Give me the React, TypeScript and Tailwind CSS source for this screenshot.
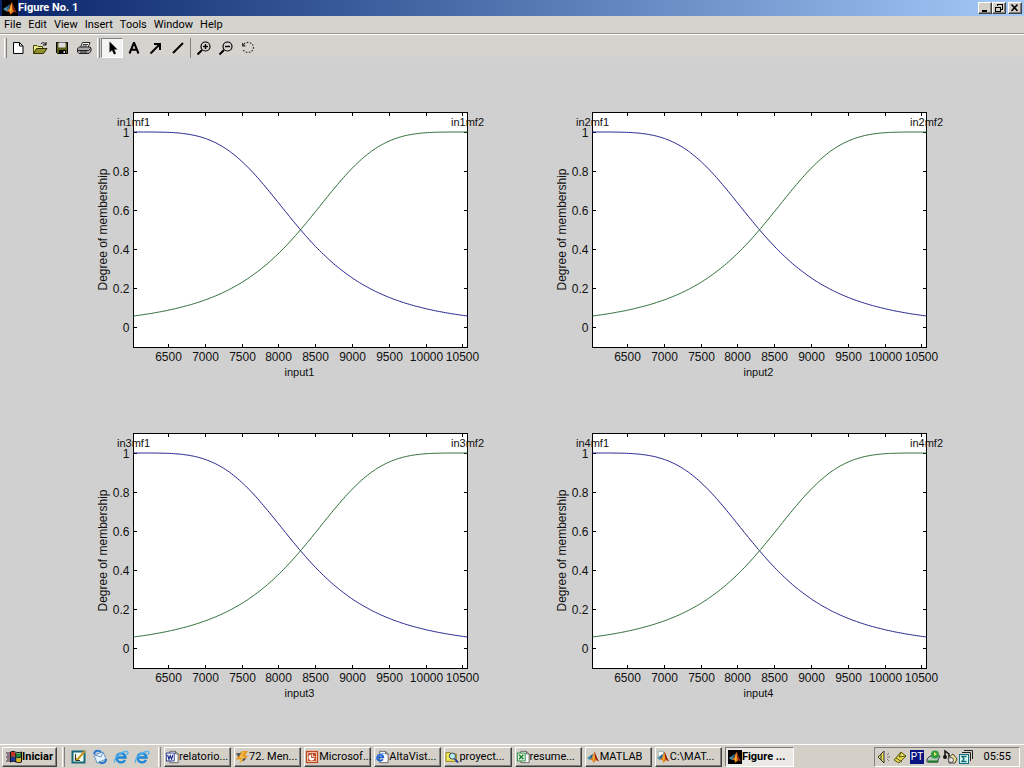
import React from 'react';

const raised = 'border border-t-white border-l-white border-r-[#404040] border-b-[#404040] shadow-[inset_-1px_-1px_0_#808080]';
const sunken = 'border border-t-[#808080] border-l-[#808080] border-r-white border-b-white';

const Icon: React.FC<{ children: React.ReactNode }> = ({ children }) => (
  <svg viewBox="0 0 16 16" className="w-4 h-4 shrink-0" fill="none" aria-hidden="true">
    {children}
  </svg>
);

const MatlabMark: React.FC<{ dark?: boolean; page?: boolean }> = ({ dark, page }) => (
  <Icon>
    {dark && <rect width="16" height="16" fill="#000" />}
    {page && <path d="M2.500 1.500 H8.500 V8 H2.500Z" fill="#fff" stroke="#8aa" />}
    <path d="M1 9 L5 6.500 L8 4.500 L6.500 10 L4.500 11.500Z" fill="#4a8fa8" />
    <path d="M5 6.500 L8 4.500 L6.500 9 L5 10Z" fill="#245e88" />
    <path d="M4.500 11.500 L7 9 L9.500 2 C11 4 12.500 10 15 13 L12 11.500 L8.500 14.500 L7 11.500Z" fill="#e07818" />
    <path d="M9.500 2 C11 4 12.500 10 15 13 L12 11.500 L10.500 9Z" fill="#8c1c10" />
    <path d="M9.400 3 L10 9 L8.500 13 L8 10Z" fill="#f8b838" />
  </Icon>
);

const ExplorerIcon: React.FC = () => (
  <Icon>
    <path d="M12 11 A4.500 4.500 0 1 1 12.500 8.500 H4.500" stroke="#1c86d8" strokeWidth="2.400" />
    <path d="M2 13.500 C-1 12 7 2 14 2.500 C15.500 3 15 4.500 14 6" stroke="#58b4ee" strokeWidth="1.400" />
  </Icon>
);

const Magnifier: React.FC<{ plus?: boolean }> = ({ plus }) => (
  <Icon>
    <circle cx="9.500" cy="6.500" r="4.500" stroke="#000" strokeWidth="1.200" />
    <path d="M6 10 L1.500 14.500" stroke="#000" strokeWidth="2" />
    <path d="M7 6.500 H12" stroke="#000" strokeWidth="1.400" />
    {plus && <path d="M9.500 4 V9" stroke="#000" strokeWidth="1.400" />}
  </Icon>
);

const fileTools = [
  { label: 'New', icon: <Icon><path d="M3.500 2.500 H9.500 L13 6 V13.500 H3.500Z" fill="#fff" stroke="#000" /><path d="M9.500 2.500 V6 H13" stroke="#000" /></Icon> },
  { label: 'Open', icon: <Icon><path d="M1.500 13.500 V5.500 H5 L6 6.500 H10.500 V8.500" fill="#f0ec90" stroke="#4a4a00" /><path d="M1.500 13.500 L4.500 8.500 H15 L11.500 13.500Z" fill="#90902c" stroke="#303000" /><path d="M9 4 C10.500 2 12.500 2.500 13.500 4.500 M14 2 V5 H11" stroke="#000" /></Icon> },
  { label: 'Save', icon: <Icon><path d="M2.500 2.500 H13.500 V13.500 H3.500 L2.500 12.500Z" fill="#5d5d14" stroke="#000" /><path d="M4.500 2.500 H11.500 V7.500 H4.500Z" fill="#dedede" /><path d="M5 10 H12 V13 H5Z" fill="#000" /><path d="M9.500 11 H11 V13 H9.500Z" fill="#ddd" /></Icon> },
  { label: 'Print', icon: <Icon><path d="M4.500 7.500 L6.500 2.500 H14 L12 7.500Z" fill="#fff" stroke="#222" /><path d="M7 4.500 H12 M6.500 6 H11" stroke="#333" /><path d="M1.500 8.500 L3.500 7 H14 L15 8 V11 L13 13.500 H3 L1.500 12Z" fill="#aaa" stroke="#222" /><path d="M2 10.500 H12.500 L14.500 8.500 M4 12 H11" stroke="#222" /></Icon> },
];

const editTools = [
  { label: 'Select', active: true, icon: <Icon><path d="M5.500 1.500 V12.500 L8 10.300 L10 14.500 L12 13.500 L10.200 9.500 H13.500Z" fill="#000" /></Icon> },
  { label: 'Text', icon: <Icon><path d="M3.500 13.500 L7.800 3 H8.200 L12.500 13.500 M5 9.800 H11" stroke="#000" strokeWidth="2" /></Icon> },
  { label: 'Arrow', icon: <Icon><path d="M2.500 13.500 L12 4" stroke="#000" strokeWidth="2" /><path d="M6 3 H13 V10 H11 V5 H6Z" fill="#000" /><path d="M9 4 L12 7 L12 4Z" fill="#000" /></Icon> },
  { label: 'Line', icon: <Icon><path d="M3 13 L13 3" stroke="#000" strokeWidth="2" /></Icon> },
];

const viewTools = [
  { label: 'Zoom in', icon: <Magnifier plus /> },
  { label: 'Zoom out', icon: <Magnifier /> },
  { label: 'Rotate', icon: <Icon><path d="M4 4 A5.500 5 0 1 1 3 9.500" stroke="#333" strokeWidth="1.200" strokeDasharray="1.600 1.400" /><path d="M2 2.500 V6.500 H6Z" fill="#333" /></Icon> },
];

const ToolGroup: React.FC<{ tools: { label: string; icon: React.ReactNode; active?: boolean }[] }> = ({ tools }) => (
  <div className="flex">
    {tools.map((tool) => (
      <button
        key={tool.label}
        aria-label={tool.label}
        className={`w-[22px] h-5 flex items-center justify-center ${tool.active ? `bg-[#f4f4f2] ${sunken}` : ''}`}
      >
        {tool.icon}
      </button>
    ))}
  </div>
);

const Grip: React.FC = () => <div className="w-[3px] h-5 border-l border-l-white border-r border-r-[#808080]"></div>;

// Axes are 334 x 235. Each curve is a bell centred on one edge and crossing 0.5 in the middle.
const bell = (d: number) => 1 / (1 + (d / 167) ** 4);
const steps = Array.from({ length: 168 }, (_, i) => i * 2);
const curveY = (d: number) => (215 - bell(d) * 195.5).toFixed(1);
const falling = steps.map((x) => `${x},${curveY(x)}`).join(' ');
const rising = steps.map((x) => `${x},${curveY(334 - x)}`).join(' ');

const xTicks = [6500, 7000, 7500, 8000, 8500, 9000, 9500, 10000, 10500];
const yTicks = [0, 0.2, 0.4, 0.6, 0.8, 1];

const xPos = (value: number) => Math.round(35 + (value - 6500) * 0.0736);
const yPos = (value: number) => Math.round(215 - value * 195.5);

const MembershipChart: React.FC<{ index: number }> = ({ index }) => (
  <svg
    viewBox="0 0 459 321"
    className="w-full h-auto font-['Liberation_Sans',Arial,sans-serif] text-[12px]"
    role="img"
    aria-label={`Membership functions of input${index}`}
  >
    <g transform="translate(80.5 20.5)">
      <g shapeRendering="crispEdges" stroke="#000">
        <rect width="334" height="235" fill="#fff" />
        {xTicks.map((t) => (
          <path key={t} d={`M${xPos(t)} 0 v3 M${xPos(t)} 235 v-4`} />
        ))}
        {yTicks.map((t) => (
          <path key={t} d={`M0 ${yPos(t)} h3 M334 ${yPos(t)} h-4`} />
        ))}
      </g>
      <polyline points={falling} fill="none" stroke="#22228c" />
      <polyline points={rising} fill="none" stroke="#2a6c34" />
      <g fill="#111">
        {xTicks.map((t) => (
          <text key={t} x={xPos(t)} y="248" textAnchor="middle">{t}</text>
        ))}
        {yTicks.map((t) => (
          <text key={t} x="-4" y={yPos(t) + 4} textAnchor="end">{t}</text>
        ))}
        <g className="text-[11px]" textAnchor="middle">
          <text x="0" y="13">{`in${index}mf1`}</text>
          <text x="334" y="13">{`in${index}mf2`}</text>
          <text x="166" y="263">{`input${index}`}</text>
        </g>
        <text transform="translate(-27 117) rotate(-90)" textAnchor="middle">Degree of membership</text>
      </g>
    </g>
  </svg>
);

const Page: React.FC<{ children: React.ReactNode }> = ({ children }) => (
  <Icon>
    <path d="M5.500 1.500 H12 L15 4.500 V14.500 H5.500Z" fill="#fff" stroke="#555" />
    <path d="M12 1.500 V4.500 H15" stroke="#555" />
    {children}
  </Icon>
);

const tasks = [
  { title: 'relatorio...', icon: <Page><rect x="1.500" y="3.500" width="9" height="9" fill="#fff" stroke="#1c2c88" /><path d="M3 5.500 L4.500 10.500 L6 6.500 L7.500 10.500 L9 5.500" stroke="#1c2c88" strokeWidth="1.400" /></Page> },
  { title: '72. Men...', icon: <Icon><path d="M8 1 L15 1 L11.500 6 L15 7 L5 15.500 L6.500 10.500 L1 11 L4 6Z" fill="#e89a20" /><path d="M1 4 L7 3 L4 8Z M8 9 L13 10 L9 13Z" fill="#555" /><path d="M10 2 L6 8 L10 8 L6 13" stroke="#ffe080" /></Icon> },
  { title: 'Microsof...', icon: <Icon><rect x="1" y="1" width="14" height="14" fill="#c04a20" /><rect x="3" y="3" width="10" height="10" stroke="#f7d9c8" /><path d="M7 5 A3.500 3.500 0 1 0 11 9 H7Z" fill="#fff" /><path d="M8.500 4.500 V7.500 H11.500" stroke="#fff" /></Icon> },
  { title: 'AltaVist...', icon: <Page><path d="M9 10.500 A3.500 3.500 0 1 1 9.500 8.500 H3" stroke="#1c5cc8" strokeWidth="2" /><path d="M1 12 C1 8 7 3 11 4" stroke="#3c8ce8" /></Page> },
  { title: 'proyect...', icon: <Icon><path d="M1 3 H6 L7 4.500 H13 V13 H1Z" fill="#f4e85c" stroke="#8a7c10" /><circle cx="8.500" cy="7" r="3.500" fill="#b4ecf8" stroke="#234" /><path d="M11 10 L15 14.500" stroke="#1838a8" strokeWidth="2" /></Icon> },
  { title: 'resume...', icon: <Page><rect x="1.500" y="3.500" width="9" height="9" fill="#e8f6e8" stroke="#1c8030" /><path d="M3.500 5.500 L8.500 10.500 M8.500 5.500 L3.500 10.500" stroke="#1c8030" strokeWidth="1.700" /></Page> },
  { title: 'MATLAB', icon: <MatlabMark /> },
  { title: 'C:\\MAT...', icon: <MatlabMark page /> },
  { title: 'Figure ...', icon: <MatlabMark dark />, active: true },
];

const quickLaunch = [
  { label: 'Desktop', icon: <Icon><rect x="1.500" y="2.500" width="12" height="11" fill="#f4fbf0" stroke="#176878" strokeWidth="2" /><path d="M4 9 L6 11 L14 2" stroke="#c89820" strokeWidth="2" /><path d="M4.500 5 V11.500 H9" stroke="#333" /></Icon> },
  { label: 'Mail', icon: <Icon><path d="M2 6 L11 3 L14 10 L5 14Z" fill="#e8f4fc" stroke="#6898c8" /><path d="M3 6 L9 8 L11 3" stroke="#6898c8" /><path d="M2 5 C3 1 7 1 9 3 M14 10 C14 14 10 15 7 13" stroke="#2878d0" strokeWidth="2" /></Icon> },
  { label: 'Internet', icon: <ExplorerIcon /> },
  { label: 'Browser', icon: <ExplorerIcon /> },
];

const App: React.FC = () => (
  <div className="min-h-screen flex flex-col bg-[#d0d0d0] text-black text-[11px] leading-4 font-[Roboto,Tahoma,sans-serif]">
    <header className="h-4 flex items-center pl-[2px] pr-[2px] bg-linear-to-r from-[#0a246a] to-[#a6caf8]">
      <MatlabMark dark />
      <h1 className="flex-1 text-white font-bold">Figure No. 1</h1>
      <div className="flex">
        <button aria-label="Minimize" className={`w-[14px] h-3 bg-[#d4d0c8] ${raised}`}>
          <svg viewBox="0 0 12 10" className="w-3 h-[10px]"><path d="M3 7 H8 V9 H3Z" fill="#000" /></svg>
        </button>
        <button aria-label="Restore" className={`w-[14px] h-3 bg-[#d4d0c8] ${raised}`}>
          <svg viewBox="0 0 12 10" className="w-3 h-[10px]" fill="none" stroke="#000" shapeRendering="crispEdges"><path d="M4.500 3 V1 H9.500 V6 H8 M4 1.500 H10" /><path d="M2.500 4 H7.500 V8.500 H2.500Z M2 4.500 H8" /></svg>
        </button>
        <button aria-label="Close" className={`ml-[2px] w-[14px] h-3 bg-[#d4d0c8] ${raised}`}>
          <svg viewBox="0 0 12 10" className="w-3 h-[10px]"><path d="M2.500 1.500 L8.500 8 M8.500 1.500 L2.500 8" stroke="#000" strokeWidth="1.600" /></svg>
        </button>
      </div>
    </header>

    <nav className="h-[18px] flex items-center gap-[7px] pl-1 bg-[#d5d3ce] border-b border-b-[#9a9894]">
      {['File', 'Edit', 'View', 'Insert', 'Tools', 'Window', 'Help'].map((item) => (
        <button key={item}>{item}</button>
      ))}
    </nav>

    <div className="h-[26px] flex items-center pl-1 bg-linear-to-b from-[#d5d3ce] from-70% to-[#d0d0d0] border-t border-t-white">
      <Grip />
      <ToolGroup tools={fileTools} />
      <div className="w-[6px] pl-[2px]"><Grip /></div>
      <ToolGroup tools={editTools} />
      <div className="w-1 pl-px"><div className="h-5 border-l border-l-[#808080]"></div></div>
      <ToolGroup tools={viewTools} />
    </div>

    <main className="flex-1 pt-8 px-[53px]">
      <div className="grid grid-cols-2">
        {[1, 2, 3, 4].map((index) => (
          <MembershipChart key={index} index={index} />
        ))}
      </div>
    </main>

    <footer className="h-6 flex items-center pl-[2px] pr-1 bg-[#d4d0c8] border-t border-t-white">
      <button className={`w-[55px] h-5 shrink-0 flex items-center justify-center font-bold ${raised}`}>
        <Icon>
          <path d="M5 3 C7 2 8 3 9.500 4 V8 C8 7 7 6.500 5 7.500Z" fill="#c83020" />
          <path d="M10 4 C12 5 13 4.500 15 3.500 V8 C13 9 12 8.500 10 8Z" fill="#208838" />
          <path d="M5 8.500 C7 7.500 8 8 9.500 9 V13 C8 12 7 11.500 5 12.500Z" fill="#1838a8" />
          <path d="M10 9 C12 10 13 9.500 15 8.500 V12.500 C13 14 12 13.500 10 13Z" fill="#d8b820" />
          <path d="M4.500 13 V3 C8 1 10 5 15.500 3 V13 C11 15 9 11 4.500 13Z M9.700 4 V13 M5 8 C8 7 10 10 15 8" stroke="#111" />
          <path d="M0 4 H4 M1 6 H4 M0 8 H4 M1 10 H4 M0 12 H4" stroke="#402040" />
        </Icon>
        Iniciar
      </button>
      <div className="ml-[5px]"><Grip /></div>
      <div className="ml-[6px] flex gap-[5px]">
        {quickLaunch.map((item) => (
          <button key={item.label} aria-label={item.label}>{item.icon}</button>
        ))}
      </div>
      <div className="ml-2"><Grip /></div>
      <div className="ml-[3px] flex-1 max-w-[630px] flex gap-[3px]">
        {tasks.map((task) => (
          <button
            key={task.title}
            className={`flex-1 min-w-0 h-5 flex items-center whitespace-nowrap [&>svg]:w-[14px] ${
              task.active ? `pl-[2px] font-bold bg-[#ebe9e5] ${sunken}` : raised
            }`}
          >
            {task.icon}
            {task.title}
          </button>
        ))}
      </div>
      <div className={`ml-auto w-[146px] h-5 shrink-0 flex items-center pl-px pr-2 ${sunken}`}>
        <Icon><path d="M2 8 L8 2 V14Z" fill="#e8dc58" stroke="#333" /><path d="M5 5 V11" stroke="#333" /><path d="M11 6 L13 4 M11 8 H14 M11 10 L13 12" stroke="#777" /></Icon>
        <Icon><path d="M2 11 L9 3 L14 7 L7 14Z" fill="#e4d850" stroke="#5c5810" /><path d="M4 9 L10 13 M9 3 L7 8 L14 7" stroke="#5c5810" /></Icon>
        <span className="w-[14px] h-[14px] mx-[2px] flex items-center justify-center bg-[#0a1480] text-white text-[10px]">PT</span>
        <Icon><path d="M1 10 L4 7 H14 L12 11 V13 H1Z" fill="#b8c8b8" stroke="#345" /><circle cx="9" cy="5.500" r="4" fill="#2c9c3c" /><path d="M8 3 L11 5 L8 7Z" fill="#f0e860" /><path d="M2 12.500 H12" stroke="#187828" strokeWidth="2" /></Icon>
        <Icon><path d="M3 8 V2 L7 5 V8" stroke="#111" strokeWidth="1.500" /><circle cx="3" cy="8" r="2" fill="#111" /><path d="M6 9 L11 5 L15 10 L13 14 H7Z" fill="#f0e490" stroke="#444" /><circle cx="9" cy="11" r="2.500" fill="#e8e8e8" stroke="#555" /></Icon>
        <Icon><path d="M6 1.500 H14.500 V10 M4 3.500 H12.500 V12" stroke="#222" /><rect x="1.500" y="5.500" width="9" height="9" fill="#d8f8f4" stroke="#167080" /><path d="M8.500 7.500 H4 L6 10 L4 12.500 H8.500" stroke="#106878" strokeWidth="1.300" /></Icon>
        <time className="ml-auto">05:55</time>
      </div>
    </footer>
  </div>
);

export default App;
